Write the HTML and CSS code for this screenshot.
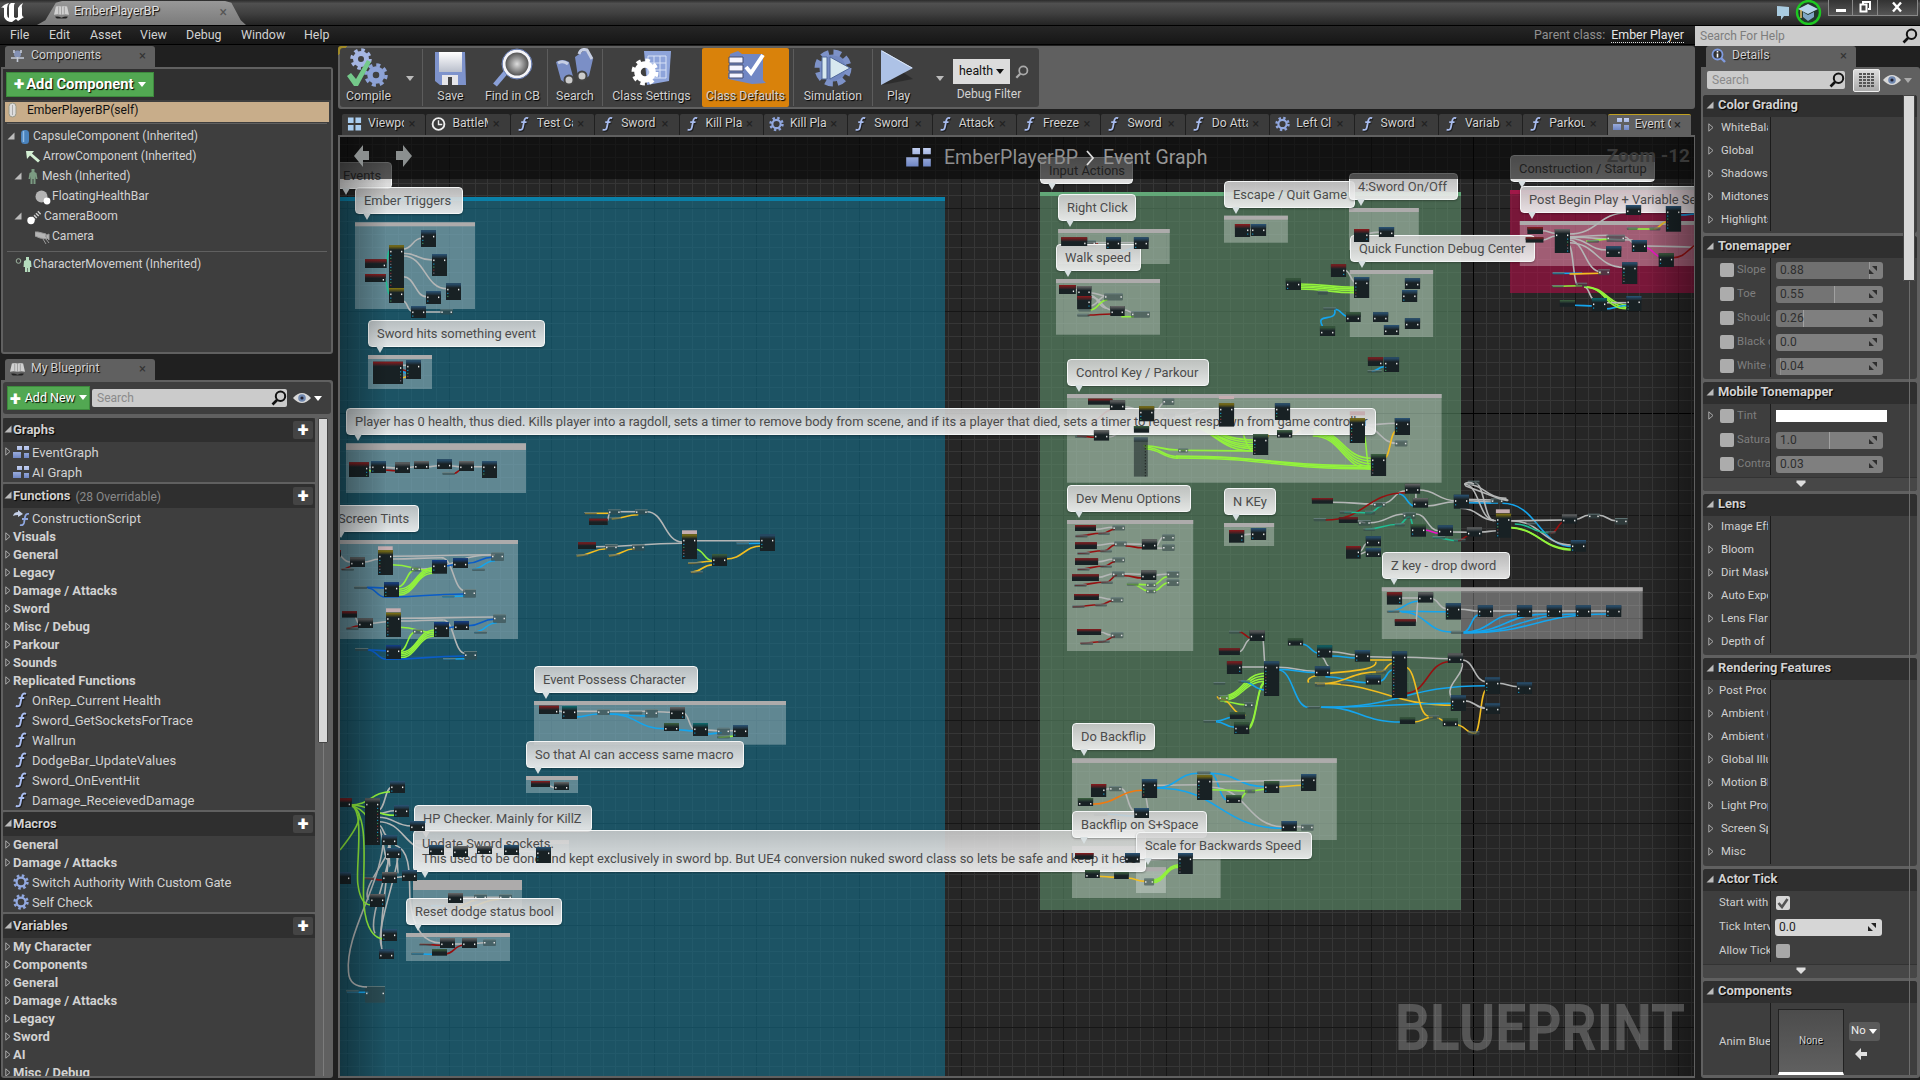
FILE: index.html
```html
<!DOCTYPE html>
<html lang="en">
<head>
<meta charset="utf-8">
<title>EmberPlayerBP</title>
<link rel="stylesheet" href="styles.css">
</head>
<body>
<svg class="defs" width="0" height="0">
  <defs>
    <linearGradient id="steel" x1="0" y1="0" x2="0" y2="1"><stop offset="0" stop-color="#c3d0f2"/><stop offset="1" stop-color="#6f86c4"/></linearGradient>
    <linearGradient id="paper" x1="0" y1="0" x2="0" y2="1"><stop offset="0" stop-color="#fff"/><stop offset="1" stop-color="#b9bfcc"/></linearGradient>
    <radialGradient id="lens"><stop offset="0" stop-color="#ddd"/><stop offset="1" stop-color="#444"/></radialGradient>
    <symbol id="i-fn" viewBox="0 0 16 16"><path d="M13 2.2c-2.6-1-3.8.4-4.300 3L7.400 11.600c-.5 2.600-1.600 3.400-4.600 2.600M5.600 6.300h5.600" fill="none" stroke="#111" stroke-width="2" transform="translate(1 1)" opacity=".6"/><path d="M13 1.800c-2.600-1-3.800.4-4.300 3L7.400 11.400c-.5 2.600-1.600 3.400-4.600 2.600M5.600 6h5.600" fill="none" stroke="#a9bdf0" stroke-width="1.900"/></symbol>
    <symbol id="i-gear" viewBox="0 0 16 16"><circle cx="8" cy="8" r="6.300" fill="none" stroke="#8fa5dc" stroke-width="2.800" stroke-dasharray="2.500 2.450"/><circle cx="8" cy="8" r="4.400" fill="none" stroke="#93a9e0" stroke-width="2.200"/></symbol>
    <symbol id="i-graph" viewBox="0 0 16 13"><path d="M4 0h5v4H4zM11 0h5v4h-5zM0 6h8v6H0zM11 7h5v5h-5z" fill="url(#steel)"/></symbol>
    <symbol id="i-mag" viewBox="0 0 16 16"><circle cx="9.500" cy="6.300" r="4.700" fill="none" stroke="currentColor" stroke-width="2"/><path d="M6 10l-4.500 4.500" stroke="currentColor" stroke-width="2.600"/></symbol>
    <symbol id="i-eye" viewBox="0 0 18 12"><path d="M0 6Q9-4 18 6Q9 16 0 6z" fill="#d8d8d8"/><circle cx="9" cy="6" r="3.800" fill="#7088b0"/><circle cx="9" cy="6" r="1.600" fill="#223"/></symbol>
    <symbol id="i-open" viewBox="0 0 8 8"><path d="M7.500.5v7h-7z" fill="#bbb"/></symbol>
    <symbol id="i-shut" viewBox="0 0 6 9"><path d="M.8.8v7.400L5 4.500z" fill="none" stroke="#aaa" stroke-width="1"/></symbol>
    <symbol id="i-book" viewBox="0 0 16 14"><path d="M2 1q3-1 6 0 3-1 6 0l2 9q-4-1-8 0-4-1-8 0z" fill="#d0d0d0"/><path d="M1 12q3-1 7 1 4-2 7-1l-2 2H3z" fill="#222"/><path d="M8 1v9M5 1v8M11 1v8" stroke="#888" stroke-width=".7"/></symbol>
    <symbol id="i-arrows" viewBox="0 0 8 8"><path d="M3 0h5v5zM0 3l5 5H0z" fill="currentColor"/></symbol>
  </defs>
</svg>

<header class="titlebar">
  <svg class="logo" viewBox="0 0 24 24"><path d="M1 8Q4 4 9 3q-2 2-2 5v6q0 3 2 4V6q0-2 2-3h4q-1 1-1 3v11q2 2 4 0V8q1-3 5-5-2 3-1 6v5q0 3 2 3-3 2-6 4l-2-2-4 3q-6 0-8-5V8Q2 7 1 8z" fill="#fff"/></svg>
  <div class="doc-tab"><svg width="15" height="14"><use href="#i-book"/></svg><span>EmberPlayerBP</span><i>×</i></div>
  <div class="title-tools">
    <svg width="14" height="16" viewBox="0 0 14 16"><path d="M1 1l12 1v9H8l-3 4v-4H1z" fill="#a9cbe0"/></svg>
    <svg width="27" height="26" viewBox="0 0 27 26"><circle cx="13.500" cy="12.500" r="11.500" fill="#23382c" stroke="#1dc821" stroke-width="2.400"/><path d="M3 9l10-5 10 5-10 5z" fill="#b6d4ea"/><path d="M8 12l5 3 6-3v5l-6 4-5-4z" fill="#7fa6c6"/><path d="M6 10v8" stroke="#e5c070" stroke-width="1.500"/></svg>
  </div>
  <div class="win-buttons">
    <span><svg width="12" height="12"><path d="M1 8h10v3H1z" fill="#fff"/></svg></span>
    <span><svg width="12" height="12"><path d="M4 3V1h7v7H9M1.500 3.500h6v7h-6z" fill="none" stroke="#fff" stroke-width="2"/></svg></span>
    <span><svg width="12" height="12"><path d="M2 1.500l8 9M10 1.500l-8 9" stroke="#fff" stroke-width="2.400"/></svg></span>
  </div>
</header>

<nav class="menubar">
  <a>File</a><a>Edit</a><a>Asset</a><a>View</a><a>Debug</a><a>Window</a><a>Help</a>
  <div class="parent">Parent class: <b>Ember Player</b></div>
  <div class="help">Search For Help<svg width="16" height="16"><use href="#i-mag"/></svg></div>
</nav>

<main class="workspace">
  <aside class="left">
    <div class="ptab"><svg width="15" height="14" viewBox="0 0 15 14"><circle cx="7.500" cy="5" r="3.600" fill="#8391b5"/><path d="M1 9h13M4 1v3M11 1v3M7.500 8v5" stroke="#c3cad8" stroke-width="1.600"/></svg><span>Components</span><i>×</i></div>
    <section class="panel components">
      <div class="comp-tools"><button class="green big"><b>+</b>Add Component<u></u></button></div>
      <div class="crow self"><svg width="9" height="16" viewBox="0 0 9 16"><rect x="1" y="1" width="7" height="14" rx="3.500" fill="#ddd" stroke="#998" /><path d="M4.500 3v10" stroke="#aaa"/></svg>EmberPlayerBP(self)</div>
      <hr>
      <div class="crow d0"><svg class="tw" width="8" height="8"><use href="#i-open"/></svg><svg width="10" height="16" viewBox="0 0 10 16"><rect x="1" y="1" width="8" height="14" rx="3.500" fill="#4a83bd"/><path d="M3.500 2v11" stroke="#91bce6" stroke-width="1.500"/></svg><span>CapsuleComponent (Inherited)</span></div>
      <div class="crow d1"><svg width="15" height="14" viewBox="0 0 15 14"><path d="M0 1l8 0-2 2.500 8 7-2 2-8-7L1 9z" fill="#d4f0d4"/></svg><span>ArrowComponent (Inherited)</span></div>
      <div class="crow d1"><svg class="tw" width="8" height="8"><use href="#i-open"/></svg><svg width="12" height="16" viewBox="0 0 12 16"><path d="M4.500 0h3v3l2 1 1 6H9L8.500 7v8h-2v-5h-1v5h-2V7L3 10H1.500l1-6 2-1z" fill="#7b9b82"/></svg><span>Mesh (Inherited)</span></div>
      <div class="crow d2"><svg width="16" height="15" viewBox="0 0 16 15"><circle cx="6.500" cy="6.500" r="6" fill="#b4b4b4"/><circle cx="12" cy="11" r="3.400" fill="#fff"/></svg><span>FloatingHealthBar</span></div>
      <div class="crow d1"><svg class="tw" width="8" height="8"><use href="#i-open"/></svg><svg width="14" height="15" viewBox="0 0 14 15"><path d="M6 9l7-7" stroke="#ccc" stroke-width="4" stroke-dasharray="1.500 1.200"/><circle cx="4" cy="10.500" r="3.700" fill="#fff"/></svg><span>CameraBoom</span></div>
      <div class="crow d2"><svg width="16" height="14" viewBox="0 0 16 14"><path d="M0 2l3 0 8 2 1 5-7-1L0 6zM10 6l4-2v6zM8 9l3 5M11 9l3 4" fill="#b5b5b5" stroke="#999"/></svg><span>Camera</span></div>
      <hr class="second">
      <div class="crow d3"><svg width="17" height="16" viewBox="0 0 17 16"><circle cx="3.500" cy="4" r="2.300" fill="none" stroke="#9db39f"/><path d="M11 0h3v3l2 1 .5 6H15v5h-2.200v-4h-.6v4H10v-5H8.500L9 4l2-1z" fill="#b5dcbd"/></svg><span>CharacterMovement (Inherited)</span></div>
    </section>

    <div class="ptab second"><svg width="15" height="14"><use href="#i-book"/></svg><span>My Blueprint</span><i>×</i></div>
    <section class="panel blueprint">
      <div class="bp-tools"><button class="green"><b>+</b>Add New<u></u></button><div class="search">Search<svg width="16" height="16"><use href="#i-mag"/></svg></div><svg width="18" height="12"><use href="#i-eye"/></svg><u></u></div>
      <div class="bp-body">
        <div class="bp-list">
          <div class="sec"><h3><svg width="8" height="8"><use href="#i-open"/></svg>Graphs<em>+</em></h3>
            <p class="item"><svg class="sh" width="6" height="9"><use href="#i-shut"/></svg><svg width="16" height="13"><use href="#i-graph"/></svg>EventGraph</p>
            <p class="item"><svg width="16" height="13"><use href="#i-graph"/></svg>AI Graph</p></div>
          <div class="sec"><h3><svg width="8" height="8"><use href="#i-open"/></svg>Functions<small>(28 Overridable)</small><em>+</em></h3>
            <p class="item"><svg width="16" height="16" viewBox="0 0 16 16"><path d="M0 6q1-4 5-4V0l5 4-5 3V5Q2 5 0 6z" fill="#c5d0e8"/><path d="M16 4q-3-1-4 3l-1 6q-1 3-4 2M9 9h6" fill="none" stroke="#8ea6df" stroke-width="1.800"/></svg>ConstructionScript</p>
            <p class="cat"><svg width="6" height="9"><use href="#i-shut"/></svg>Visuals</p>
            <p class="cat"><svg width="6" height="9"><use href="#i-shut"/></svg>General</p>
            <p class="cat"><svg width="6" height="9"><use href="#i-shut"/></svg>Legacy</p>
            <p class="cat"><svg width="6" height="9"><use href="#i-shut"/></svg>Damage / Attacks</p>
            <p class="cat"><svg width="6" height="9"><use href="#i-shut"/></svg>Sword</p>
            <p class="cat"><svg width="6" height="9"><use href="#i-shut"/></svg>Misc / Debug</p>
            <p class="cat"><svg width="6" height="9"><use href="#i-shut"/></svg>Parkour</p>
            <p class="cat"><svg width="6" height="9"><use href="#i-shut"/></svg>Sounds</p>
            <p class="cat"><svg width="6" height="9"><use href="#i-shut"/></svg>Replicated Functions</p>
            <p class="item"><svg width="16" height="16"><use href="#i-fn"/></svg>OnRep_Current Health</p>
            <p class="item"><svg width="16" height="16"><use href="#i-fn"/></svg>Sword_GetSocketsForTrace</p>
            <p class="item"><svg width="16" height="16"><use href="#i-fn"/></svg>Wallrun</p>
            <p class="item"><svg width="16" height="16"><use href="#i-fn"/></svg>DodgeBar_UpdateValues</p>
            <p class="item"><svg width="16" height="16"><use href="#i-fn"/></svg>Sword_OnEventHit</p>
            <p class="item"><svg width="16" height="16"><use href="#i-fn"/></svg>Damage_ReceievedDamage</p></div>
          <div class="sec"><h3><svg width="8" height="8"><use href="#i-open"/></svg>Macros<em>+</em></h3>
            <p class="cat"><svg width="6" height="9"><use href="#i-shut"/></svg>General</p>
            <p class="cat"><svg width="6" height="9"><use href="#i-shut"/></svg>Damage / Attacks</p>
            <p class="item tight"><svg width="16" height="16"><use href="#i-gear"/></svg>Switch Authority With Custom Gate</p>
            <p class="item tight"><svg width="16" height="16"><use href="#i-gear"/></svg>Self Check</p></div>
          <div class="sec"><h3><svg width="8" height="8"><use href="#i-open"/></svg>Variables<em>+</em></h3>
            <p class="cat"><svg width="6" height="9"><use href="#i-shut"/></svg>My Character</p>
            <p class="cat"><svg width="6" height="9"><use href="#i-shut"/></svg>Components</p>
            <p class="cat"><svg width="6" height="9"><use href="#i-shut"/></svg>General</p>
            <p class="cat"><svg width="6" height="9"><use href="#i-shut"/></svg>Damage / Attacks</p>
            <p class="cat"><svg width="6" height="9"><use href="#i-shut"/></svg>Legacy</p>
            <p class="cat"><svg width="6" height="9"><use href="#i-shut"/></svg>Sword</p>
            <p class="cat"><svg width="6" height="9"><use href="#i-shut"/></svg>AI</p>
            <p class="cat"><svg width="6" height="9"><use href="#i-shut"/></svg>Misc / Debug</p></div>
        </div>
        <div class="track"><div class="thumb"></div></div>
      </div>
    </section>
  </aside>

  <section class="center">
    <div class="toolbar">
      <div class="tools">
        <div class="tool t-compile"><svg width="44" height="40" viewBox="0 0 44 40"><circle cx="17" cy="11" r="5.500" fill="none" stroke="#a5b6e2" stroke-width="5"/><circle cx="17" cy="11" r="9" fill="none" stroke="#a5b6e2" stroke-width="3.500" stroke-dasharray="3.500 3.560"/><circle cx="32" cy="27" r="6" fill="none" stroke="#8da2d6" stroke-width="5.500"/><circle cx="32" cy="27" r="10" fill="none" stroke="#8da2d6" stroke-width="3.500" stroke-dasharray="4 3.850"/><path d="M3 28l4-3 5 6L23 12l4 2-13 24h-4z" fill="#74c98a"/></svg>Compile</div>
        <div class="tool t-drop"><u></u></div><s></s>
        <div class="tool t-save"><svg width="36" height="40" viewBox="0 0 36 40"><path d="M2 4h30l1 33H7l-5-4z" fill="#7e93cc"/><path d="M6 4h23v20H6z" fill="url(#paper)"/><path d="M9 27h16v10H9z" fill="#e6e6ea"/><path d="M15 29h4v8h-4z" fill="#444"/></svg>Save</div>
        <div class="tool t-find"><svg width="42" height="40" viewBox="0 0 42 40"><path d="M14 24L3 37" stroke="#8aa0d8" stroke-width="5"/><circle cx="25" cy="16" r="13" fill="url(#lens)" stroke="#f4f4f8" stroke-width="3"/><circle cx="25" cy="16" r="15" fill="none" stroke="#6d84bd"/></svg>Find in CB</div><s></s>
        <div class="tool t-search"><svg width="40" height="40" viewBox="0 0 40 40"><path d="M1 14q6-4 13 0l5 18q-7 5-13 0zM20 9l3 20q6 4 11-1l4-17-8-9z" fill="#7b8fc6"/><path d="M3 15q5-3 10 1M24 6q2-6 8-4l5 9" stroke="#c7cfe4" stroke-width="3" fill="none"/><circle cx="14" cy="32" r="4.500" fill="#ccc" stroke="#444" stroke-width="2"/><circle cx="27" cy="28" r="4.500" fill="#ccc" stroke="#444" stroke-width="2"/></svg>Search</div><s></s>
        <div class="tool t-cs"><svg width="42" height="40" viewBox="0 0 42 40"><path d="M13 3h27l-2 30-22 4z" fill="#8ea4da"/><path d="M17 8h18v22H17zM23 8v22M29 8v22M17 15h18M17 22h18" fill="none" stroke="#d8e2f6"/><circle cx="14" cy="24" r="7.500" fill="none" stroke="#fff" stroke-width="6.500"/><circle cx="14" cy="24" r="11.500" fill="none" stroke="#fff" stroke-width="4" stroke-dasharray="4.500 4.530"/></svg>Class Settings</div>
        <div class="tool t-cd"><svg width="42" height="40" viewBox="0 0 42 40"><path d="M5 6l8-3 4 3h21v26l3 3-14 1L3 31z" fill="#7187c4"/><path d="M4 9h14v6H4zM4 17h14v6H4zM4 25h14v5H4z" fill="#f4f4ff" stroke="#444c70"/><path d="M21 19l5 6L38 7" fill="none" stroke="#fff" stroke-width="4"/></svg>Class Defaults</div><s></s>
        <div class="tool t-sim"><svg width="42" height="40" viewBox="0 0 42 40"><circle cx="21" cy="20" r="13.500" fill="#7288c0"/><circle cx="21" cy="20" r="15.500" fill="none" stroke="#7d92c8" stroke-width="6" stroke-dasharray="7.500 4.670"/><path d="M10 9h5v22h-5zM18 9l20 11-20 11z" fill="#d7e8ef" stroke="#51699b"/></svg>Simulation</div><s></s>
        <div class="tool t-play"><svg width="36" height="40" viewBox="0 0 36 40"><path d="M3 37l31-6-12-8z" fill="#222" opacity=".6"/><path d="M2 2l32 18L2 37z" fill="#adc2e6"/><path d="M3 3l30 17" stroke="#dce8f8"/></svg>Play</div>
        <div class="tool t-drop2"><u></u></div>
        <div class="filter"><div><span class="select">health<u></u></span><svg width="14" height="14"><use href="#i-mag"/></svg></div>Debug Filter</div>
      </div>
    </div>
    <div class="tabs" id="tabs"></div>
    <div class="canvas" id="canvas">
      <svg class="layer" viewBox="340 137 1354 940" id="back"></svg>
      <div class="layer" id="bubbles"></div>
      <svg class="layer" viewBox="340 137 1354 940" id="front"></svg>
      <div class="crumbs">
        <svg class="nav" width="62" height="26" viewBox="0 0 62 26"><path d="M2 12L11 1v6h6v9h-6v7zM60 12L51 1v6h-7v9h7v7z" fill="#8b8f8f"/></svg>
        <svg class="gi" width="25" height="20"><use href="#i-graph"/></svg>
        <span>EmberPlayerBP</span><svg class="chev" width="9" height="16"><path d="M1 1l6 7-6 7" fill="none" stroke="#ddd" stroke-width="1.800"/></svg><span class="last">Event Graph</span><strong>Zoom -12</strong>
      </div>
      <svg class="mark" width="292" height="56"><text x="0" y="51" textLength="290" lengthAdjust="spacingAndGlyphs">BLUEPRINT</text></svg>
    </div>
  </section>

  <aside class="right">
    <div class="ptab"><svg width="15" height="15" viewBox="0 0 15 15"><circle cx="6.500" cy="6.500" r="5" fill="#333" stroke="#7f9be0" stroke-width="1.800"/><path d="M10 10l4 4" stroke="#7f9be0" stroke-width="2.400"/><path d="M6.500 5.500v4M6.500 3v1.500" stroke="#fff" stroke-width="1.600"/></svg><span>Details</span><i>×</i></div>
    <section class="panel details">
      <div class="d-tools"><div class="search">Search<svg width="16" height="16"><use href="#i-mag"/></svg></div><span class="gridbtn"><svg width="15" height="15"><path d="M0 1h15M0 4h15M0 7h15M0 10h15M0 13h15" stroke="#555" stroke-width="2" stroke-dasharray="3 1"/></svg></span><svg width="18" height="12"><use href="#i-eye"/></svg><u></u></div>
      <div class="d-body">
        <div class="d-list">
          <div class="dsec"><h3><svg width="8" height="8"><use href="#i-open"/></svg>Color Grading</h3><div class="rows">
            <p><svg width="6" height="9"><use href="#i-shut"/></svg><span>WhiteBala</span></p><p><svg width="6" height="9"><use href="#i-shut"/></svg><span>Global</span></p><p><svg width="6" height="9"><use href="#i-shut"/></svg><span>Shadows</span></p><p><svg width="6" height="9"><use href="#i-shut"/></svg><span>Midtones</span></p><p><svg width="6" height="9"><use href="#i-shut"/></svg><span>Highlights</span></p></div></div>
          <div class="dsec"><h3><svg width="8" height="8"><use href="#i-open"/></svg>Tonemapper</h3><div class="rows tall">
            <p><i></i><span>Slope</span><b class="num f88">0.88<svg width="8" height="8"><use href="#i-arrows"/></svg></b></p>
            <p><i></i><span>Toe</span><b class="num f55">0.55<svg width="8" height="8"><use href="#i-arrows"/></svg></b></p>
            <p><i></i><span>Should</span><b class="num f26">0.26<svg width="8" height="8"><use href="#i-arrows"/></svg></b></p>
            <p><i></i><span>Black c</span><b class="num">0.0<svg width="8" height="8"><use href="#i-arrows"/></svg></b></p>
            <p><i></i><span>White c</span><b class="num f04">0.04<svg width="8" height="8"><use href="#i-arrows"/></svg></b></p></div></div>
          <div class="dsec"><h3><svg width="8" height="8"><use href="#i-open"/></svg>Mobile Tonemapper</h3><div class="rows tall">
            <p><svg width="6" height="9"><use href="#i-shut"/></svg><i></i><span>Tint</span><b class="white"></b></p>
            <p><i></i><span>Satura</span><b class="num f50">1.0<svg width="8" height="8"><use href="#i-arrows"/></svg></b></p>
            <p><i></i><span>Contra</span><b class="num">0.03<svg width="8" height="8"><use href="#i-arrows"/></svg></b></p></div><div class="more"><u></u></div></div>
          <div class="dsec"><h3><svg width="8" height="8"><use href="#i-open"/></svg>Lens</h3><div class="rows">
            <p><svg width="6" height="9"><use href="#i-shut"/></svg><span>Image Eff</span></p><p><svg width="6" height="9"><use href="#i-shut"/></svg><span>Bloom</span></p><p><svg width="6" height="9"><use href="#i-shut"/></svg><span>Dirt Mask</span></p><p><svg width="6" height="9"><use href="#i-shut"/></svg><span>Auto Expo</span></p><p><svg width="6" height="9"><use href="#i-shut"/></svg><span>Lens Flare</span></p><p><svg width="6" height="9"><use href="#i-shut"/></svg><span>Depth of F</span></p></div></div>
          <div class="dsec"><h3><svg width="8" height="8"><use href="#i-open"/></svg>Rendering Features</h3><div class="rows loose">
            <p class="near"><svg width="6" height="9"><use href="#i-shut"/></svg><span>Post Proce</span></p><p><svg width="6" height="9"><use href="#i-shut"/></svg><span>Ambient C</span></p><p><svg width="6" height="9"><use href="#i-shut"/></svg><span>Ambient O</span></p><p><svg width="6" height="9"><use href="#i-shut"/></svg><span>Global Illu</span></p><p><svg width="6" height="9"><use href="#i-shut"/></svg><span>Motion Bl</span></p><p><svg width="6" height="9"><use href="#i-shut"/></svg><span>Light Prop</span></p><p><svg width="6" height="9"><use href="#i-shut"/></svg><span>Screen Sp</span></p><p><svg width="6" height="9"><use href="#i-shut"/></svg><span>Misc</span></p></div></div>
          <div class="dsec"><h3><svg width="8" height="8"><use href="#i-open"/></svg>Actor Tick</h3><div class="rows tall plain">
            <p><span>Start with</span><b class="chk"><svg width="12" height="12"><path d="M1.500 6l3.500 4 5.500-8" fill="none" stroke="#555" stroke-width="2.600"/></svg></b></p>
            <p><span>Tick Interv</span><b class="num lit">0.0<svg width="8" height="8"><use href="#i-arrows"/></svg></b></p>
            <p><span>Allow Tick</span><b class="chk off"></b></p></div><div class="more"><u></u></div></div>
          <div class="dsec"><h3><svg width="8" height="8"><use href="#i-open"/></svg>Components</h3><div class="rows plain anim">
            <p><span>Anim Blue</span><b class="thumbnail">None</b><span class="pick"><span>No<u></u></span><svg width="12" height="12"><path d="M0 6l6-6v4h6v4H6v4z" fill="#e0e0e0"/></svg></span></p></div></div>
        </div>
        <div class="track"><div class="thumb"></div></div>
      </div>
    </section>
  </aside>
</main>
<script src="graph.js"></script>
</body>
</html>
```
FILE: styles.css
```css
* { box-sizing: border-box; }
html, body { margin: 0; width: 1920px; height: 1080px; overflow: hidden; }
body { background: #202020; color: #d2d2d2; font: 13px/1 Roboto, "Noto Sans", sans-serif; display: flex; flex-direction: column; }
h3, p, hr { margin: 0; font-size: 13px; }
svg { flex: none; display: block; }
i, em { font-style: normal; }
s { text-decoration: none; }
.defs { position: absolute; }
u { display: block; flex: none; width: 0; height: 0; border: 4.5px solid transparent; border-top: 5px solid #fff; border-bottom: 0; }

.titlebar { height: 25px; display: flex; align-items: flex-start; background: linear-gradient(#2b2b2b, #505050 14%, #3f3f3f 55%, #232323); }
.logo { width: 24px; height: 24px; }
.doc-tab { margin: 1px 0 0 13px; width: 209px; height: 24px; padding: 0 19px 3px 17px; display: flex; align-items: center; font-size: 12.400px; color: #e0e0e0; text-shadow: 1px 1px 1px #000; background: linear-gradient(#989898, #7b7b7b); clip-path: polygon(0 100%, 4% 80%, 9% 7%, 12% 0, 90% 0, 93% 7%, 97.500% 80%, 100% 100%); }
.doc-tab span { margin-left: 5px; flex: 1; }
.doc-tab i { color: #555; text-shadow: none; font-size: 14px; }
.title-tools { margin-left: auto; display: flex; align-items: center; height: 25px; gap: 5px; padding-right: 6px; }
.win-buttons { display: flex; height: 16px; width: 90px; margin-right: 2px; border: 1px solid #888; border-top: 0; background: linear-gradient(#333, #555); }
.win-buttons span { flex: 1; display: flex; justify-content: center; align-items: center; border-left: 1px solid #888; padding-bottom: 1px; }
.win-buttons span:first-child { border: 0; }
.win-buttons span:last-child { flex: 1.700; }

.menubar { height: 20px; border-top: 1px solid #000; border-bottom: 1px solid #000; display: grid; grid-template-columns: 39px 41px 50px 46px 55px 63px 40px 1fr auto; padding-left: 10px; align-items: center; background: linear-gradient(#262626, #161616); font-size: 12.400px; }
.menubar a { padding-bottom: 2px; }
.parent { justify-self: end; margin-right: 11px; color: #909090; display: flex; gap: 6px; padding-bottom: 2px; }
.parent b { font-weight: 400; color: #e6e6e6; border-bottom: 1px dotted #ddd; padding-bottom: 1px; margin-bottom: -2px; }
.help { width: 225px; height: 20px; background: #cbcbcb; color: #7d7d7d; padding: 0 2px 0 5px; display: flex; align-items: center; justify-content: space-between; font-size: 12px; }
.help svg, .search svg { color: #111; }

.workspace { height: 1035px; display: grid; grid-template-columns: 333px 1357px 219px; column-gap: 5px; }
.right { margin-left: 1px; width: 219px; }
.left, .right, .center { display: flex; flex-direction: column; min-width: 0; padding-top: 1px; }
.ptab { width: 150px; height: 21px; margin-left: 5px; background: #606060; border-radius: 3px 3px 0 0; display: flex; align-items: center; padding: 0 9px 2px 5px; text-shadow: 1px 1px 1px #000; font-size: 12.300px; }
.ptab span { margin-left: 6px; flex: 1; }
.ptab i { color: #333; text-shadow: none; font-size: 13px; }
.ptab.second { margin-top: 5px; }
.panel { margin-left: 1px; background: #606060; padding: 2px; border-radius: 0 3px 3px 3px; display: flex; flex-direction: column; min-height: 0; }
.components { height: 287px; background: #3e3e3e; border: 2px solid #606060; padding: 0; }
.comp-tools { height: 31px; background: #303030; padding: 3px; }
.green { font: 12.500px Roboto, sans-serif; color: #fff; background: #52a852; border: 1px solid #3d8a3d; height: 24px; width: 83px; display: flex; align-items: center; padding: 0 4px 1px 2px; gap: 4px; text-shadow: 1px 1px 1px #000; white-space: nowrap; }
.green b { font: 900 20px/12px Roboto, sans-serif; text-shadow: none; }
.green.big { font-weight: 700; font-size: 14.800px; width: 148px; height: 25px; padding-left: 7px; }
.green.big b { font-size: 19px; margin-right: -2px; }
.crow { height: 20px; display: flex; align-items: center; margin-left: 12px; font-size: 12.100px; }
.crow svg + span { margin: -2px 0 0 3px; }
.self { margin: 2px 2px 0; background: #c8ad8a; color: #111; padding: 0 0 4px 3px; gap: 10px; }
hr { border: 0; height: 1px; background: #606060; margin: 1px 4px 3px; }
hr.second { margin: 4px 4px 3px; }
.d0 { padding-left: 4px; }
.d1 { padding-left: 11px; }
.d2 { padding-left: 20px; }
.crow.d2 svg + span { margin-left: 1px; }
.crow.d1 svg + span { margin-left: 2px; }
.crow.d3 svg + span { margin-left: 1px; }
.crow .tw { margin: -3px 5px 0 -12px; }
.d1 .tw + svg { margin: 0 1px 0 0; }

.blueprint { height: 698px; }
.bp-tools { height: 32px; background: #3e3e3e; border-radius: 3px; display: flex; align-items: center; padding: 0 0 0 4px; }
.bp-tools .search { margin: 0 6px 0 2px; width: 195px; }
.bp-tools > u { margin-left: 3px; }
.search { height: 18px; background: #cbcbcb; color: #8a8a8a; border-radius: 2px; display: flex; align-items: center; justify-content: space-between; padding: 0 0 0 5px; font-size: 12px; }
.bp-body { flex: 1; min-height: 0; margin-top: 4px; display: flex; overflow: hidden; }
.bp-list { width: 312px; display: flex; flex-direction: column; gap: 2px; }
.sec { background: #3e3e3e; flex: none; }
.sec h3 { height: 24px; background: #2f2f2f; display: flex; align-items: center; padding: 0 2px 2px 1px; border-radius: 3px 3px 0 0; text-shadow: 1px 1px 1px #000; font-size: 13px; }
.sec h3 svg { margin-right: 1px; margin-top: -1px; }
.sec h3 small { font-size: 12px; font-weight: 400; color: #8a8a8a; margin: 3px 0 0 5px; text-shadow: none; }
.sec h3 em { margin: 2px 0 0 auto; width: 20px; height: 18px; background: #444; border-radius: 2px; color: #fff; font: 900 20px/16px Roboto, sans-serif; text-align: center; text-shadow: none; }
.item { height: 20px; display: flex; align-items: center; gap: 3px; padding-left: 10px; letter-spacing: .05px; }
.item.tight { letter-spacing: -.1px; }
.item .sh { margin: -2px 0 0 -8px; }
.item .sh + svg { margin-left: -1px; }
.cat { height: 18px; display: flex; align-items: center; gap: 2px; padding: 0 0 2px 2px; font-weight: 700; }
.track { position: relative; flex: 1; background: linear-gradient(90deg, transparent 8px, #7c7c7c 8px 9px, transparent 9px); }
.thumb { margin-left: 3px; width: 10px; height: 325px; background: #d8d8d8; border: 1px solid #444; border-radius: 1px; }

.toolbar { height: 63px; background: linear-gradient(135deg, #a08a28 7px, #606060 7px); border-radius: 3px; padding: 2px; }
.tools { width: 699px; height: 59px; background: #404040; border-radius: 3px; display: flex; align-items: stretch; }
.tools s { width: 1px; background: #5c5c5c; margin: 1px 0; }
.tool { display: flex; flex-direction: column; align-items: center; justify-content: space-between; padding: 0 0 5px; text-shadow: 1px 1px 1px #000; font-size: 12.300px; white-space: nowrap; }
.t-compile { width: 57px; }
.t-compile svg { margin-left: -5px; }
.t-drop { width: 25px; }
.tool u { margin-top: 28px; border-top-color: #bbb; }
.t-save { width: 55px; }
.t-find { width: 69px; }
.t-search { width: 54px; }
.t-cs { width: 99px; padding-right: 2px; }
.t-cd { width: 87px; background: #d9820b; margin-right: 4px; border-radius: 2px; }
.t-sim { width: 78px; }
.t-play { width: 51px; }
.t-play svg { margin-left: -3px; }
.t-drop2 { width: 31px; }
.filter { width: 72px; display: flex; flex-direction: column; gap: 4px; padding-top: 11px; text-align: center; margin-left: -2px; white-space: nowrap; font-size: 12.100px; }
.filter div { display: flex; align-items: center; gap: 5px; }
.filter svg { color: #aaa; }
.select { width: 57px; height: 25px; background: #dcdcdc; color: #111; display: flex; align-items: center; justify-content: center; gap: 3px; font-size: 12.400px; flex: none; }
.select u { border-top-color: #111; }

.tabs { height: 26px; padding: 5px 4px 0; display: grid; grid-template-columns: repeat(16, 1fr); gap: 1px; }
.tab { height: 21px; background: #3b3b3b; border-radius: 2px 2px 0 0; display: flex; align-items: center; padding: 0 10px 2px 5px; text-shadow: 1px 1px 1px #000; min-width: 0; }
.tab svg { width: 15px; height: 16px; }
.tab span { width: 36px; margin-left: 6px; overflow: hidden; white-space: nowrap; line-height: 17px; font-size: 12.200px; }
.tab i { margin-left: auto; color: #222; text-shadow: none; }
.tab.active { background: #606060; border-top: 1px solid #c0a020; }
.tab:last-child svg { height: 13px; width: 16px; }

.canvas { position: relative; height: 943px; border: 2px solid #606060; border-right-width: 1px; background: #262626; overflow: hidden; }
.layer { position: absolute; left: 0; top: 0; width: 1354px; height: 940px; }
.bubble { position: absolute; border: 1.500px solid #f4f6f6; border-radius: 4px; background: linear-gradient(rgba(205, 205, 205, .88), rgba(240, 240, 240, .92)); color: #4b4b4b; padding: 0 8px; display: flex; align-items: center; font-size: 12.900px; line-height: 15px; white-space: pre; box-shadow: 0 1px 2px rgba(0, 0, 0, .3); }
.bubble::after { content: ""; position: absolute; left: 7px; top: 100%; border: 4px solid transparent; border-top: 7px solid #d8e0e2; border-bottom: 0; }
.crumbs { position: absolute; left: 0; right: 0; top: 0; height: 42px; background: rgba(6, 6, 6, .62); color: #8f8f8f; font-size: 19.500px; display: flex; align-items: center; padding-bottom: 1px; }
.nav { margin: -1px 0 0 12px; }
.gi { margin: 0 13px 0 492px; }
.chev { margin: 0 8px; }
.crumbs .last { color: #979797; }
.crumbs strong { margin-left: auto; margin-right: 4px; margin-top: -4px; color: #383838; font-size: 19px; }
.mark { position: absolute; right: 7px; bottom: 21px; }
.mark text { font: 700 65px Roboto, sans-serif; fill: #c8c8c8; fill-opacity: .3; }

.right .search { width: 138px; height: 18px; }
.details { height: 1011px; padding-bottom: 3px; margin-left: 0; }
.d-tools { height: 26px; display: flex; align-items: center; padding: 0 4px 4px; }
.gridbtn { width: 27px; height: 23px; background: linear-gradient(#ddd, #aaa); border: 1px solid #eee; border-radius: 2px; display: flex; align-items: center; justify-content: center; margin: 0 3px 0 8px; }
.d-tools u { margin-left: 3px; border-top-color: #aaa; }
.d-body { flex: 1; min-height: 0; overflow: hidden; display: flex; position: relative; }
.d-list { width: 214px; display: flex; flex-direction: column; gap: 3px; }
.dsec { background: #3e3e3e; border-radius: 3px; flex: none; overflow: hidden; }
.dsec h3 { height: 22px; background: #2f2f2f; display: flex; align-items: center; gap: 4px; padding: 0 0 2px 3px; text-shadow: 1px 1px 1px #000; font-size: 12.900px; }
.dsec h3 svg { margin-top: -1px; }
.rows { padding-bottom: 1px; background: linear-gradient(90deg, transparent 67px, #1c1c1c 67px 68px, transparent 68px) 0 0 / 100% calc(100% - 2px) no-repeat; }
.rows.loose { padding-bottom: 2px; }
.rows p { height: 23px; display: flex; align-items: center; padding: 0 0 1px 5px; font-size: 11.300px; white-space: nowrap; letter-spacing: .1px; }
.rows p > svg { margin: -1px 7px 0 0; }
.rows p > span:first-of-type { width: 47px; overflow: hidden; line-height: 16px; }
.rows .near > svg { margin-right: 5px; }
.rows.tall p { height: 24px; padding-bottom: 0; }
.tall { color: #7f7f7f; }
.tall p > i { width: 14px; height: 14px; background: #acacac; border-radius: 2px; margin: 0 3px 0 12px; flex: none; }
.tall p > svg + i { margin-left: -1px; }
.rows.tall p > span:first-of-type { width: 33px; margin-right: 6px; }
.rows.plain p { padding-left: 16px; color: #cfcfcf; }
.rows.plain p > span:first-of-type { width: 51px; margin-right: 5px; }
.num { width: 107px; height: 17px; border-radius: 3px; background: #7f7f7f; color: #2e2e2e; font-weight: 400; font-size: 12px; display: flex; align-items: center; justify-content: space-between; padding: 0 6px 0 4px; }
.f88 { background: linear-gradient(90deg, #707070 93px, #999 93px 94px, #7f7f7f 94px); }
.f55 { background: linear-gradient(90deg, #747474 58px, #a0a0a0 58px 59px, #7f7f7f 59px); }
.f50 { background: linear-gradient(90deg, #747474 53px, #a0a0a0 53px 54px, #7f7f7f 54px); }
.f26 { background: linear-gradient(90deg, #747474 27px, #a0a0a0 27px 28px, #7f7f7f 28px); }
.f04 { background: linear-gradient(90deg, #747474 4px, #909090 4px 5px, #7f7f7f 5px); }
.lit { background: #d6d6d6; color: #222; }
.white { width: 111px; height: 12px; background: #fff; }
.chk { width: 14px; height: 14px; margin-left: 1px; background: #d6d6d6; border-radius: 2px; display: flex; align-items: center; justify-content: center; }
.chk.off { background: #a8a8a8; }
.more { height: 14px; background: #474747; border-top: 1px solid #333; display: flex; justify-content: center; align-items: center; padding-right: 18px; }
.more u { border-width: 5px; border-bottom: 0; border-top: 5px solid #ddd; box-shadow: 0 -2px 0 -0.500px #ddd; }
.anim { height: 76px; }
.rows.anim p { height: 78px; align-items: center; }
.thumbnail { width: 66px; height: 66px; margin: 1px 6px 0 3px; background: linear-gradient(#4c4c4c, #606060); border: 1px solid #222; border-bottom: 3px solid #fff; font-weight: 400; font-size: 10px; display: flex; align-items: center; justify-content: center; flex: none; text-shadow: 1px 1px #000; }
.pick { display: flex; flex-direction: column; align-items: center; gap: 7px; margin: -2px 0 0 -1px; color: #eee; }
.pick svg { margin-right: 7px; }
.pick span { width: 31px; height: 19px; background: #5a5a5a; border-radius: 3px; display: flex; align-items: center; gap: 3px; padding-left: 2px; }
.right .track { position: absolute; right: 0; top: 0; bottom: 0; width: 17px; background: linear-gradient(90deg, transparent 8px, #6c6c6c 8px 9px, transparent 9px); }
.right .thumb { height: 186px; width: 12px; margin-left: 2px; }
```
FILE: graph.js
```js
// Document tabs above the graph: icon, label.
const TABS = [['view', 'Viewpo'], ['clock', 'BattleM'], ['fn', 'Test Ca'], ['fn', 'Sword'], ['fn', 'Kill Pla'], ['gear', 'Kill Pla'],
  ['fn', 'Sword'], ['fn', 'Attack'], ['fn', 'Freeze'], ['fn', 'Sword'], ['fn', 'Do Atta'], ['gear', 'Left Cli'], ['fn', 'Sword'], ['fn', 'Variab'], ['fn', 'Parkou'], ['graph', 'Event G']];
const glyph = {
  view: '<svg viewBox="0 0 16 16"><path d="M1 1h6v6H1zM9 1h6v6H9zM1 9h6v6H1zM9 9h6v6H9z" fill="#a9cdf0"/></svg>',
  clock: '<svg viewBox="0 0 16 16"><circle cx="8" cy="8" r="6.300" fill="none" stroke="#eee" stroke-width="2"/><path d="M8 4v4.500h4" fill="none" stroke="#eee" stroke-width="1.500"/></svg>'
};
document.getElementById('tabs').innerHTML = TABS.map(([icon, label], n) =>
  `<div class="tab${n === 15 ? ' active' : ''}">${glyph[icon] || `<svg><use href="#i-${icon}"/></svg>`}<span>${label}</span><i>×</i></div>`).join('');

// Comment bubbles: x, y, width, text.
const BUBBLES = [
  [334, 162, 58, 'Events'], [355, 187, 108, 'Ember Triggers'], [368, 320, 177, 'Sword hits something event'],
  [346, 408, 1030, 'Player has 0 health, thus died. Kills player into a ragdoll, sets a timer to remove body from scene, and if its a player that died, sets a timer to request respawn from game controller'],
  [329, 505, 90, 'Screen Tints'], [534, 666, 164, 'Event Possess Character'], [526, 741, 218, 'So that AI can access same macro'],
  [414, 805, 178, 'HP Checker. Mainly for KillZ'],
  [413, 830, 733, 'Update Sword sockets.\nThis used to be done and kept exclusively in sword bp. But UE4 conversion nuked sword class so lets be safe and keep it here'],
  [406, 898, 156, 'Reset dodge status bool'],
  [1040, 157, 93, 'Input Actions'], [1058, 194, 78, 'Right Click'], [1056, 244, 85, 'Walk speed'], [1224, 181, 131, 'Escape / Quit Game'],
  [1349, 173, 109, '4:Sword On/Off'], [1350, 235, 185, 'Quick Function Debug Center'], [1510, 155, 145, 'Construction / Startup'],
  [1520, 186, 200, 'Post Begin Play + Variable Se'], [1067, 359, 142, 'Control Key / Parkour'], [1067, 485, 124, 'Dev Menu Options'],
  [1224, 488, 52, 'N KEy'], [1382, 552, 128, 'Z key - drop dword'], [1072, 723, 83, 'Do Backflip'], [1072, 811, 135, 'Backflip on S+Space'],
  [1136, 832, 176, 'Scale for Backwards Speed']
];
document.getElementById('bubbles').innerHTML = BUBBLES.map(([x, y, w, t]) =>
  `<div class="bubble" style="left:${x - 340}px;top:${y - 137}px;width:${w}px;height:${t.includes('\n') ? 42 : 27}px">${t}</div>`).join('');

// Each cluster has an origin, a unit size, and boxes / wires / nodes in its own units.
// box: x1 y1 x2 y2 header   wire: colour x1 y1 x2 y2   node: kind x y w h
const CLUSTERS = [
{ at: [335, 180], unit: [1 / 3, 1 / 3],
  boxes: '60 127 420 387 12|99 525 291 627 12|33 790 573 939 20|12 1080 549 1377 12',
  wires: `w 205 207 260 175|w 205 220 292 240|w 205 228 335 326|w 205 290 275 350|w 205 364 230 393|w 270 396 318 396|t 152 252 163 213|t 150 300 163 342
r 190 566 215 572|o 200 594 215 590|b 203 575 215 580|w 200 556 218 556
w 98 862 115 862|w 150 862 182 864|w 222 862 240 860|w 280 860 308 857|w 345 857 375 860|w 415 860 442 860|r 150 870 182 872|l 96 870 115 874|r 358 880 378 870
o 750 1000 825 1000|w 815 1025 825 998|w 855 995 905 995|o 830 1016 910 1004|w 935 995 1042 1086|w 780 1100 1042 1090|o 725 1127 815 1106|o 822 1127 900 1106|w 1083 1082 1280 1082|l 1080 1107 1133 1142|o 1060 1150 1133 1144|o 1068 1177 1133 1154|o 1172 1137 1280 1098|b 1205 1091 1280 1090
w 0 1120 45 1146|w 85 1146 132 1138|w 172 1129 472 1124|w 172 1137 325 1133|w 320 1133 390 1232|w 240 1168 480 1124|l 170 1154 295 1172|l 190 1220 240 1170|l 190 1228 295 1164|l 190 1234 295 1169|l 190 1240 295 1174|l 190 1245 295 1180|u 95 1222 150 1224|u 98 1224 150 1251|u 150 1251 390 1242|u 335 1157 357 1154|u 398 1150 472 1132|b 412 1167 480 1142|b 322 1250 390 1248|r 20 1168 55 1158
w 60 1312 70 1328|w 110 1330 155 1325|w 195 1315 478 1311|w 195 1323 325 1320|w 325 1320 390 1420|l 195 1342 300 1358|l 195 1414 240 1357|l 195 1417 300 1350|l 195 1422 300 1356|l 195 1427 300 1362|l 195 1433 300 1368|u 98 1409 155 1412|u 98 1410 155 1438|u 155 1438 390 1428|u 340 1343 360 1340|u 400 1337 478 1318|b 418 1356 485 1328|b 325 1438 390 1436|r 35 1345 70 1338`,
  nodes: `b 258 151 45 50|b 291 222 45 66|b 333 310 45 50|b 273 333 45 39|y 162 196 45 130|y 162 324 45 45|r 90 238 65 26|r 90 282 62 24|b 228 378 45 36|s 316 388 38 16
r 114 545 90 67|b 213 541 45 56
r 42 847 60 44|b 108 843 45 36|k 180 847 45 32|k 237 843 45 24|b 306 838 45 29|k 372 843 45 30|b 441 843 45 51|s 322 876 38 9
s 747 996 38 8|s 819 988 38 16|s 900 988 38 16|r 762 1016 56 19|s 822 1012 36 7|r 729 1087 54 20|s 810 1092 38 20|s 891 1092 38 20|s 723 1123 36 7|s 819 1123 36 7|p 1041 1051 45 12|y 1041 1063 45 74|g 1131 1122 45 36|b 1275 1063 45 50|s 1204 1087 38 10|s 1060 1146 40 8|s 1066 1174 38 8
k 45 1132 45 29|r 10 1110 8 20|p 129 1099 44 12|y 129 1111 45 74|s 468 1117 39 26|n 291 1140 45 41|n 354 1135 45 29|s 228 1160 30 14|n 147 1207 45 44|s 57 1218 40 9|s 384 1227 39 26|s 411 1165 39 8|s 321 1246 38 7|s 19 1164 38 8
r 21 1294 45 19|k 69 1315 45 29|p 153 1285 44 12|y 153 1298 45 73|s 474 1303 39 26|n 297 1326 45 45|n 357 1323 45 27|s 234 1347 30 14|n 153 1395 45 42|s 60 1404 40 9|s 387 1413 39 26|s 417 1353 39 8|s 324 1434 38 7|s 33 1342 38 8` },
{ at: [335, 660], unit: [1 / 3, 1 / 3],
  boxes: '597 123 1353 254 12|573 348 729 399 12|240 540 702 632 12|234 660 561 770 30|213 819 525 903 12',
  wires: `w 668 152 685 155|w 722 154 790 154|w 822 154 935 154|w 965 155 1008 157|w 1046 160 1078 208|b 722 171 790 162|b 822 162 935 168|b 822 162 990 206|b 1028 209 1078 213|b 1115 222 1160 218|w 1115 210 1150 212|w 1182 212 1200 212|l 1150 232 1205 228|w 640 377 660 383
w 130 450 170 382|w 130 460 180 452|w 130 472 230 498|w 130 485 285 570|w 130 495 160 530|w 130 505 160 600|l 45 435 170 395|l 45 435 180 466|w 160 540 165 620|w 165 545 100 720|w 160 560 145 880|w 165 560 120 820|w 185 590 190 640|w 185 652 205 650|w 190 570 140 860|r 90 655 145 660|b 35 997 100 997
w 325 573 355 573|w 395 573 430 573|w 468 572 510 572|w 550 572 605 575|w 380 712 420 712|w 455 712 495 712|o 360 740 430 720|o 365 748 500 718|b 250 737 330 737
w 355 852 385 852|w 425 850 448 848|r 255 852 320 856|r 330 882 385 856|b 230 881 295 883`,
  nodes: `r 612 137 60 25|t 681 138 45 39|s 786 147 39 18|s 882 154 40 10|s 930 147 39 26|k 1005 141 45 36|g 987 189 45 24|t 1074 189 45 39|s 1146 203 39 22|b 1194 195 45 36|s 1146 226 39 10
r 588 363 57 18|k 657 366 45 24
b 165 363 45 36|b 177 435 45 36|b 225 483 45 30|r 0 415 50 26|k 90 415 45 140|b 141 525 45 30|b 153 564 45 30|b 141 807 45 36|k 141 636 45 33|b 201 630 45 33|b 0 636 48 36|k 105 702 45 39|b 132 868 45 29|s 90 978 60 50|s 33 991 38 10|s 85 652 38 8
b 282 555 45 30|k 354 558 45 33|k 426 558 45 24|b 507 555 45 30|b 603 561 45 48|s 252 598 38 8|s 307 600 30 10|k 339 699 45 30|s 417 702 39 20|s 492 702 39 20|s 249 733 39 8|s 330 732 39 24
k 315 834 45 30|k 381 834 45 30|s 444 838 39 20|g 291 867 45 20|s 252 849 38 8|s 228 877 38 8` },
{ at: [1035, 150], unit: [1 / 2.376, 1 / 3],
  boxes: '55 237 320 342 12|50 387 297 554 12|449 197 601 278 12|746 174 912 300 12|748 360 946 561 12|76 732 966 998 12|1152 213 1590 348 12',
  wires: `w 120 278 175 278|w 200 278 240 278|r 120 285 150 282|b 200 305 245 290|r 180 322 200 312
w 95 418 105 425|w 130 428 170 438|w 130 435 170 475|w 130 468 170 438|w 130 440 185 480|l 130 480 172 450|r 125 495 182 492|w 212 480 235 488|l 205 500 235 500
w 508 240 518 240|w 790 250 820 246|w 735 360 765 400|l 628 402 762 412|l 628 407 762 417|l 628 412 762 422|l 628 417 762 428|b 712 478 683 528|b 712 478 745 500|b 800 664 830 650
r 125 817 190 778|w 215 770 250 780|w 280 790 310 757|w 330 800 440 775|l 330 815 522 870|l 330 812 522 877|l 330 818 522 884|l 330 815 522 890|l 330 822 522 896|l 330 818 522 904|r 100 858 145 862|w 172 862 240 810|l 468 800 522 905|o 550 865 565 810|o 605 855 640 835|l 660 838 800 925|l 660 843 800 933|l 660 848 800 941|l 660 853 800 949|l 660 858 800 957|l 780 850 795 955|w 780 825 860 820|w 780 830 860 880|o 830 925 858 843|l 258 887 340 900|l 340 901 520 903|l 262 892 340 920|l 262 897 340 925|l 335 920 800 948|l 335 924 800 957|l 335 918 800 953
w 1205 242 1238 250|w 1205 270 1238 258|w 1268 252 1408 188|w 1268 260 1362 256|w 1268 265 1360 300|w 1268 270 1345 365|w 1268 278 1400 352|w 1268 285 1290 405|w 1268 262 1420 270|w 1400 260 1425 280|w 1450 288 1590 292|m 1450 293 1488 320|r 1515 323 1590 280|l 1310 273 1365 268|l 1410 237 1470 237|o 1470 237 1502 215|b 1530 195 1590 190|b 1230 370 1300 370|o 1270 372 1345 370|l 1230 409 1300 407|l 1305 410 1412 465|l 1305 412 1412 472|w 1305 410 1330 450|b 1280 466 1330 468|b 1350 477 1412 466|w 1355 458 1412 458|l 1305 410 1405 476`,
  nodes: `r 62 262 62 26|s 117 270 28 20|b 169 262 35 35|b 235 262 35 35|s 172 303 30 8|s 172 318 36 8
r 57 405 40 27|k 100 408 34 32|r 100 438 34 40|s 164 430 45 22|k 179 468 34 30|s 228 483 45 20|s 100 491 30 9|s 103 478 30 7
r 475 222 36 39|b 513 222 36 36|r 758 237 36 39|b 817 231 36 30|r 703 343 36 38|g 596 385 36 35|b 758 381 36 63|s 672 422 24 12|b 879 385 36 32|b 872 420 36 36|b 803 487 36 29|b 879 505 36 32|b 829 525 36 30|s 685 472 30 8|g 739 487 35 29|g 677 529 36 29|r 791 622 36 26|b 829 622 36 44|s 790 660 34 8
r 126 746 58 18|k 178 751 36 29|s 303 745 28 20|y 247 769 36 45|y 437 760 36 70|p 437 738 36 9|b 570 760 36 50|s 305 788 28 34|s 123 813 28 8|s 196 822 34 8|g 235 828 36 20|k 140 841 36 31|s 95 856 28 8|e 235 862 33 118|s 340 895 24 13|g 518 853 36 62|g 575 841 36 22|s 633 822 30 32|p 748 784 36 12|y 748 805 36 74|b 855 804 36 51|s 855 871 30 19|g 798 912 36 66
r 1170 231 37 21|r 1166 262 42 16|k 1235 237 36 72|b 1404 165 36 30|b 1499 168 36 77|s 1358 254 44 22|b 1418 270 36 36|b 1357 289 36 32|g 1482 310 36 41|b 1395 337 36 65|s 1406 232 26 8|s 1460 232 26 10|s 1312 270 28 8|s 1338 358 28 18|s 1230 366 28 8|s 1284 398 28 12|s 1228 405 28 8|g 1247 450 36 20|t 1323 444 36 40|b 1405 438 36 45` },
{ at: [1035, 480], unit: [1 / 2.376, 1 / 3],
  boxes: '76 120 376 513 12|449 129 568 198 12|824 322 1444 477 12',
  wires: `w 145 148 185 142|r 97 168 160 160|r 160 160 190 148|w 145 196 190 190|r 102 220 165 212|r 165 212 190 195|w 215 192 255 193|r 215 198 255 203|w 285 200 305 172|w 285 204 305 205|w 150 245 185 238|r 102 268 165 258|r 165 258 190 245|w 150 292 188 281|r 95 316 170 306|r 170 306 195 286|w 212 281 255 283|r 212 287 255 294|w 285 285 315 282|l 218 312 270 314|l 230 312 270 333|l 280 314 315 290|l 280 333 318 308|w 150 352 180 358|r 90 380 155 374|r 155 374 185 362|w 155 456 180 465|r 108 490 160 485|r 160 485 190 470
w 495 164 515 162|w 707 67 810 72|w 825 70 882 32|w 912 30 1000 62|r 690 120 882 38|b 865 42 902 78|w 905 40 905 60|w 930 78 1000 65|w 1000 58 1090 60|w 1025 62 1085 66|b 1030 68 1100 70|b 1110 70 1280 200|w 1020 12 1090 120|w 1045 8 1090 122|w 1020 12 1120 55|w 1010 85 1098 122|t 735 97 800 98|t 795 98 825 78|w 765 122 785 128|w 795 128 880 102|t 785 148 865 133|t 865 133 890 110|w 905 102 960 152|t 890 110 900 140|m 925 150 962 160|t 945 172 1005 182|r 1005 182 1030 168|w 990 156 1030 157|w 1060 156 1098 152|w 1128 122 1255 120|w 1130 122 1278 195|t 1140 132 1220 158|r 1225 160 1258 125|w 1285 118 1315 106|w 1340 106 1380 122|l 1120 142 1280 208|l 1120 143 1282 211|w 770 222 790 215|w 770 215 790 190
w 868 354 912 354|w 940 355 978 386|b 840 394 912 364|b 865 394 978 395|b 870 396 990 456|w 905 425 910 365|w 1010 388 1055 393|w 1085 393 1150 393|w 1178 393 1220 393|w 1250 393 1290 393|w 1318 393 1360 393|b 1018 456 1055 404|b 1018 456 1148 402|b 1018 457 1218 402|b 1018 458 1288 402|b 1018 459 1360 402
r 485 456 515 475|w 485 515 512 478|w 540 470 548 560|w 490 561 548 561|w 578 562 668 574|b 578 568 670 578|l 440 650 548 580|l 440 654 548 588|l 440 658 548 596|l 440 662 548 604|l 505 742 548 604|l 505 748 548 608|l 450 665 500 674|b 490 604 548 630|o 435 655 500 706|o 432 650 440 660|b 430 723 470 712|b 430 725 475 742|b 578 570 650 682|b 635 493 675 520|w 705 515 765 525|b 705 528 765 534|w 680 530 700 560|w 795 530 850 532|o 795 540 850 540|o 810 545 650 608|b 690 590 790 608|o 670 612 820 575|o 820 575 850 550|b 820 603 850 570|o 665 610 1000 676|w 880 532 985 536|r 880 640 985 545|b 680 682 1000 670|b 680 682 1072 617|b 680 682 870 726|o 880 562 935 708|o 900 726 945 712|o 955 714 975 724|o 1000 734 1045 760|o 1045 760 1072 630|w 1015 540 1072 605|w 1015 545 990 655|w 1100 610 1148 620|w 1020 662 1072 685`,
  nodes: `r 95 135 50 18|s 184 136 30 16|s 95 164 30 8|s 150 157 28 8|r 95 187 52 20|s 188 184 30 16|k 254 178 36 31|s 100 216 30 8|s 155 209 28 8|s 302 163 30 20|s 302 193 30 20|r 95 235 55 20|s 184 232 30 16|s 100 264 30 8|s 155 255 28 8|r 88 283 64 20|s 183 274 30 18|k 252 271 36 29|s 93 312 30 8|s 157 304 28 8|s 313 273 30 20|s 313 298 30 20|s 218 308 28 9|s 264 308 24 13|s 264 327 24 13|r 93 342 59 18|s 180 352 30 16|s 88 376 30 8|s 143 371 28 8|r 100 447 57 18|s 180 457 30 18|s 108 487 30 8|s 150 481 28 8
r 461 150 36 38|b 513 144 36 36|r 658 54 50 17|s 803 66 30 15|k 879 11 36 30|k 898 54 36 29|s 1028 2 28 12|b 995 44 36 42|s 1083 55 30 16|s 662 114 30 10|s 724 92 28 10|s 784 92 24 12|r 722 112 45 17|s 768 120 30 17|s 874 97 30 20|g 893 132 36 38|b 957 136 36 32|k 1026 142 36 28|p 1095 88 33 12|y 1095 101 36 72|k 1252 103 36 28|s 1314 101 28 14|s 1378 114 30 20|b 1273 180 36 35|s 945 168 30 9|s 995 176 28 10|s 780 145 28 8|s 855 130 24 10|s 1168 128 24 8|s 1213 154 24 8|r 739 198 35 38|b 786 169 36 30|b 786 204 36 27
r 836 337 36 37|k 910 337 36 31|s 836 390 30 9|b 976 370 36 49|r 855 418 50 20|s 988 452 30 10|b 1052 376 36 35|b 1145 376 36 35|b 1216 376 36 35|b 1285 376 36 35|b 1357 376 36 35
s 461 452 28 9|k 510 451 36 32|r 437 505 50 20|r 456 544 36 38|b 544 544 36 104|s 424 606 28 8|s 483 601 28 8|s 436 645 24 18|s 497 667 22 16|g 463 697 36 20|g 473 727 36 35|s 400 720 30 8|g 601 475 36 22|t 670 496 36 37|b 760 510 36 35|b 848 514 36 140|b 665 559 36 29|b 786 586 36 28|s 665 608 24 12|s 810 569 24 12|s 726 605 30 8|s 647 678 30 8|g 867 712 36 20|s 936 706 24 12|g 969 715 36 24|s 1028 754 28 12|k 981 520 36 29|b 1069 592 36 50|b 1145 607 36 35|b 988 646 36 47|b 1069 670 36 32` },
{ at: [1035, 710], unit: [1 / 2.376, 1 / 3],
  boxes: '88 145 717 390 14|88 408 441 564 12|240 472 311 549 12',
  wires: `w 165 238 178 236|w 205 236 236 302|f 135 283 258 241|w 262 260 270 296|w 288 226 388 224|b 288 233 388 190|b 288 234 590 355|b 415 190 458 270|b 415 190 548 230|w 418 215 635 211|w 418 232 590 350|l 418 239 505 242|l 515 242 548 238|l 485 268 505 246|o 578 230 635 226|w 620 350 635 350|b 172 313 236 318
b 180 472 215 450|w 138 440 170 440|o 150 499 190 502|o 220 504 262 514|l 278 510 342 464|l 278 514 342 468|l 278 518 342 472|w 245 450 342 446`,
  nodes: `r 133 222 36 39|s 176 228 30 16|b 254 207 36 57|g 102 264 36 24|s 385 184 32 9|y 385 196 36 74|s 499 238 24 12|g 544 213 36 36|g 454 255 36 24|b 632 192 36 51|b 236 294 35 30|s 140 310 33 8|b 586 333 36 30|s 632 342 30 20
r 95 429 44 18|s 150 438 28 18|b 214 429 35 29|s 152 468 32 9|b 340 429 35 63|g 119 480 35 24|g 188 487 35 20|s 259 505 24 22` }
];

// Wires that loop back on themselves, drawn as full paths.
const LOOPS = [
  ['w', 'M383 845C378 890 345 935 348.500 972C349 982 356 987 367 987'],
  ['w', 'M395 845C412 850 409 880 410 900C413 930 425 943 441 943'],
  ['l', 'M350 805C366 808 355 870 358 885C360 900 365 905 371 905'],
  ['l', 'M350 805C372 812 361 880 364 905C366 930 375 939 384 939'],
  ['l', 'M350 805C366 812 360 825 340 850'],
  ['l', 'M350 805C368 810 370 820 370 843'],
  ['w', 'M1501 499C1512 503 1508 498 1500 499L1466 486C1462 482 1470 482 1474 484']
];

const WIRE = { w: '#b4b6b6', l: '#92f23c', b: '#14a5ee', u: '#0a5cc8', o: '#f2bd20', r: '#961010', t: '#1fbf94', m: '#f012c8', f: '#f07a10' };
const HEAD = { r: '#8e1a1c', b: '#2a5578', n: '#123f8c', y: '#8a7a10', g: '#3c6340', t: '#0d6d70', k: '#6a6a6a', e: '#4a6a80' };
const rows = t => t.split(/[|\n]/).filter(Boolean).map(r => r.trim().split(' '));
const rect = (x, y, w, h, fill, extra = '') => `<rect x="${x}" y="${y}" width="${w}" height="${h}" fill="${fill}" ${extra}/>`;

function grid() {
  let s = '';
  for (let n = -90; n < 60; n++) {
    const x = (1473 + n * 12.8).toFixed(1), y = (413 + n * 12.8).toFixed(1);
    const c = n === 0 ? '#000' : n % 8 === 0 ? '#161616' : '#363636';
    s += `<path d="M${Math.round(x) + .5} 137V1077M340 ${Math.round(y) + .5}H1694" stroke="${c}"/>`;
  }
  return s;
}

let back = `<defs>${Object.entries(HEAD).map(([k, c]) => `<linearGradient id="h-${k}" x1="0" y1="0" x2="0" y2="1"><stop offset="0" stop-color="${c}"/><stop offset="1" stop-color="#1b2428"/></linearGradient>`).join('')}
<linearGradient id="edge" x1="0" x2="1" y1="0" y2="0"><stop offset="0" stop-color="#000" stop-opacity=".35"/><stop offset=".035" stop-color="#000" stop-opacity="0"/><stop offset=".965" stop-color="#000" stop-opacity="0"/><stop offset="1" stop-color="#000" stop-opacity=".35"/></linearGradient></defs>` + grid();
back += rect(340, 197, 605, 880, '#15718e', 'opacity=".6"') + rect(340, 197, 605, 4, '#0a80a8');
back += rect(1040, 192, 421, 718, '#5f916c', 'opacity=".6"') + rect(1040, 192, 421, 4, '#62a878');
back += rect(1510, 190, 190, 103, '#a80f45', 'opacity=".64"') + rect(1510, 190, 190, 4, '#a01848');
let wires = '', front = '';

for (const { at: [ox, oy], unit: [ux, uy], boxes, wires: ws, nodes } of CLUSTERS) {
  const X = v => +(ox + v * ux).toFixed(1), Y = v => +(oy + v * uy).toFixed(1);
  for (const [a, b, c, d, h] of rows(boxes)) {
    back += rect(X(a), Y(b), X(c) - X(a), Y(d) - Y(b), '#fff', 'opacity=".3"') + rect(X(a), Y(b), X(c) - X(a), h * uy, '#adabab');
  }
  for (const [k, a, b, c, d] of rows(ws)) {
    const x1 = X(a), y1 = Y(b), x2 = X(c), y2 = Y(d), t = (x2 - x1) * .5;
    const path = t < 0 ? `M${x1} ${y1}C${x1 + 3} ${y1 + 14} ${x2 - 8} ${y2 - 14} ${x2} ${y2}` : `M${x1} ${y1}C${x1 + t} ${y1} ${x2 - t} ${y2} ${x2} ${y2}`;
    wires += `<path d="${path}" fill="none" stroke="${WIRE[k]}" stroke-width="1.6"/>`;
  }
  for (const [k, a, b, c, d] of rows(nodes)) {
    const x = X(a), y = Y(b), w = +(c * ux).toFixed(1), h = +(d * uy).toFixed(1);
    if (k === 's') {
      wires += rect(x, y, w, h, '#35474a', 'opacity=".6" rx="1"') + rect(x, y, w, 1, '#7d9494', 'opacity=".6"');
      if (h > 4) wires += rect(x + 1, y + h * .4, 1.5, 1.5, '#ddd') + rect(x + w - 2.5, y + h * .4, 1.5, 1.5, '#ddd');
      continue;
    }
    if (k === 'p') { front += rect(x, y, w, h, '#c5adb0'); continue; }
    const o = k === 'e' ? 'opacity=".55"' : '';
    const head = Math.min(4.5, h * .5);
    front += rect(x, y, w, h, '#182124', o) + rect(x, y, w, head, `url(#h-${k})`, o);
    if (k === 'e') { for (let p = 8; p < h; p += 3) front += rect(x + w - 3, y + p, 1, 1, '#111'); continue; }
    if (h > 7) {
      front += rect(x + w - 3, y + head + 1, 1.3, 1.6, '#eee');
      if (k !== 'r') front += rect(x + 1.2, y + head + 1, 1.3, 1.6, '#eee');
    }
    for (let p = head + 5, n = 0; p < h - 2; p += 3, n++) front += rect(k === 'k' || k === 'r' ? x + w - 3 : x + 1.2, y + p, 1.2, 1.2, ['#1593c0', '#3f8f5a', '#83302f', '#778'][n % 4]);
  }
}
for (const [k, d] of LOOPS) wires += `<path d="${d}" fill="none" stroke="${WIRE[k]}" stroke-width="1.6"/>`;
document.getElementById('back').innerHTML = back + wires;
document.getElementById('front').innerHTML = front + rect(340, 137, 1354, 940, 'url(#edge)');
```
